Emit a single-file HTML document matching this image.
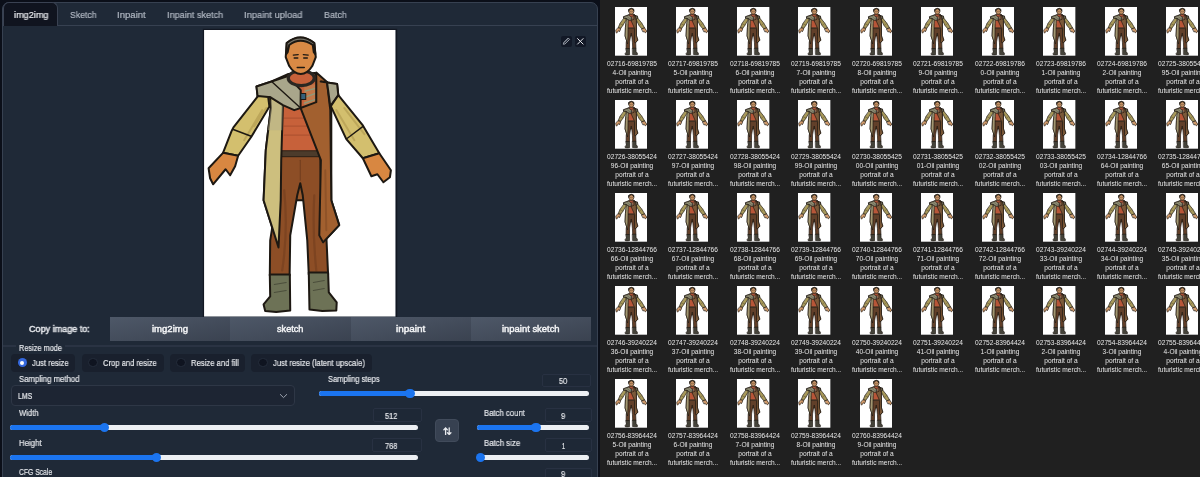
<!DOCTYPE html>
<html><head><meta charset="utf-8">
<style>
*{box-sizing:border-box;margin:0;padding:0}
html,body{width:1200px;height:477px;overflow:hidden;background:#0b0f19;font-family:"Liberation Sans",sans-serif}
.a{position:absolute} svg{display:block}
.t{position:absolute;white-space:nowrap;transform-origin:left top;line-height:normal;will-change:transform;-webkit-text-stroke:0.2px currentColor}
#lp{position:absolute;left:2px;top:2px;width:595.5px;height:490px;background:#1f2937;border:1px solid #374151;border-radius:7px 7px 0 0}
#gal{position:absolute;left:600px;top:0;width:600px;height:477px;background:#202020}
.trk{height:5px;border-radius:3px;background:#eceff3}
.fill{height:5px;border-radius:3px 0 0 3px;background:#1b74ef}
.thumb{width:9.4px;height:9.4px;border-radius:50%;background:#1b74ef}
.nb{border:1px solid #283142;border-radius:2px;background:#1e2836}
.btn{background:linear-gradient(to bottom right,#4e5868,#3a4250);}
.rb{background:#19202d;border-radius:4px}
.ib{width:10.6px;height:10.6px;background:#121826;border-radius:2px}
.tu{--sw:4;--sl:#a89a5c;--ln:#a39670;--ct:#735436;--cf:#7b5a3a;--lg:#62402a;--bt:#45433a;--lp:#8f8d74;--sh:#b9573a;--sk:#d09a6a;--hr:#a8a294;--sc:#a86a48}
.cap{position:absolute;width:80px;text-align:center;font-size:6.6px;line-height:8.9px;color:#e6e6e6;white-space:nowrap;will-change:transform}
</style></head><body>
<svg width="0" height="0" style="position:absolute"><defs><g id="fig">
<rect width="191" height="286" fill="#fff"/>
<g stroke="#1d1812" style="stroke-width:var(--sw,1.7)" stroke-linejoin="round" stroke-linecap="round">
<path d="M52.3 56.4 L67.4 51.4 L83.7 44 L111 43 L116.4 51.4 L132.8 53.9 L134 65.2 L127 80 L127 170 L134.9 194.8 L118.8 212 L115 205 L115 170 L76 170 L74.3 217 L59.4 170 L61.6 120 L66.7 77.7 L53.5 66.4 Z" style="fill:var(--ct,#9a5a2d)"/>
<path d="M76 124 L116 124 L117 172 L122 205 L123.8 244 L104.5 244 L103 210 L98.5 165 L96 153 L93 165 L86 205 L85.4 245 L65.6 245 L66 210 L72 172 Z" style="fill:var(--lg,#8d4e26)"/>
<path d="M80 160 Q84 200 78 240 M110 165 Q108 200 112 240" stroke="#6e3a1c" style="stroke-width:2.2;opacity:.5" fill="none"/>
<path d="M96 130 L96 150" stroke="#5e3018" style="stroke-width:1;opacity:.6"/>
<path d="M65.6 244 L85.6 244 L86 280 L72 281.5 L61 280.5 L59.4 274 L66 266 Z" style="fill:var(--bt,#6d7256)"/>
<path d="M104.5 242 L123.8 242 L124.5 262 L132.4 272 L132 280 L118 280.5 L105.2 279 Z" style="fill:var(--bt,#6d7256)"/>
<path d="M70 254 L82 252 M70 262 L82 260 M109 252 L120 250 M109 260 L120 258" stroke="#3d3f30" style="stroke-width:1;opacity:.7"/>
<path d="M78.7 50 L112 50 L112 122 L77.5 122 L78.7 74 Z" style="fill:var(--sh,#c7613a)" stroke="none"/>
<path d="M80 88 L108 88 M80 96 L109 96 M80 105 L110 105" stroke="#b05330" style="stroke-width:1.2"/>
<path d="M77.5 120.5 L115 120.5 L115 126.5 L77.5 126.5 Z" fill="#4c3b2b" style="stroke-width:0.8"/>
<path d="M66 66.4 L78.7 74 L77 130 L76.5 170 L74.3 217 L59.4 170 L61.6 120 L66.7 77.7 Z" style="fill:var(--ln,#cdbf7e)"/>
<path d="M66.5 70 L78.7 75 L78 100 L63.5 100 L66.7 77.7 Z" style="fill:var(--lp,#b3ae8c);stroke-width:0;opacity:.45"/>
<path d="M100 56 L112 54 L112 76 L100 81 Z" style="fill:var(--sc,#c2784a)" stroke="none"/>
<path d="M101 61 L112 58 M101 67 L112 63 M100 73 L112 69" stroke="#8e9a7a" style="stroke-width:1.4"/>
<path d="M96.3 77.8 L112 72 L112 42.5 L122.7 52 L126 80 L127 170 L134.9 194.8 L118.8 212 L115 205 L116.6 130 Z" style="fill:var(--cf,#a2602f)"/>
<path d="M121 140 L122 200" stroke="#7a4420" style="stroke-width:2;opacity:.45"/>
<path d="M112 44 L112 72" style="stroke-width:1.2"/>
<path d="M52.3 56.4 L67.4 51.4 L83.7 46 L90 53 L96.5 60 L96.3 77.8 L90 80 L78.7 75 L66 67 L53.5 67 Z" style="fill:var(--lp,#a9a68b)"/>
<path d="M67.4 51.4 L96.3 77.8" style="stroke-width:1.4"/>
<path d="M116.4 51.4 L132.8 53.9 L134 65.2 L126 76 L122.7 52 Z" style="fill:var(--lp,#a9a68b)"/>
<ellipse cx="97" cy="48" rx="13" ry="7.5" stroke="#2b2722" style="fill:var(--sh,#c7613a);stroke-width:3.2"/>
<rect x="96.5" y="63.5" width="5" height="6" fill="#36607a" style="stroke-width:1"/>
<path d="M53.8 66 L64 67 L65.2 76.4 L47.2 106.6 L34 125.5 L18.9 122.6 L27.4 101 L29.3 97.2 Z" style="fill:var(--sl,#d3bf6e)"/>
<path d="M58 80 L40 110 M62 78 L50 96" stroke="#a89048" style="stroke-width:2;opacity:.5"/>
<path d="M28.5 99 L47 106" style="stroke-width:1.6"/>
<path d="M134 65 L158.5 95.3 L174.9 123 L158.5 128 L142 109 L126.5 76 Z" style="fill:var(--sl,#d3bf6e)"/>
<path d="M132 80 L150 110 M140 78 L160 104" stroke="#a89048" style="stroke-width:2;opacity:.5"/>
<path d="M143 108 L159 96" style="stroke-width:1.4"/>
<path d="M18.9 122.6 L34 125.5 L31 136 L26 145 L21.5 139 L9 154 L6 148 L4.5 138 Z" style="fill:var(--sk,#d88741)"/>
<path d="M158.5 128 L174.9 123 L186.5 140 L185.5 147 L179 152 L173 144 L167 146 Z" style="fill:var(--sk,#d88741)"/>
<path d="M82.5 13 Q96 2 110 13 L111.5 27 L108 36 Q103 44 96.5 44 Q90 44 85 36 L81.5 27 Z" style="fill:var(--sk,#d98a45)"/>
<path d="M82.5 13 Q96 2 110 13 L111 24 L109.5 22 L108.5 15 Q96 6.5 85 15 L83.5 22 L82 24 Z" style="fill:var(--hr,#7a776d)"/>
<path d="M89 25 L94 24.5 M99 24.5 L104 25" style="stroke-width:1.2"/>
<path d="M90 28 L93.5 28 M99.5 28 L103 28 M93 37.5 L100 37.5" style="stroke-width:1.5"/>
</g>
</g>
</defs></svg>
<div id="lp"></div>
<div id="gal"></div>
<div class="a" style="left:58px;top:25px;width:539px;height:1px;background:#374151"></div><div class="a" style="left:3px;top:2px;width:55px;height:24px;background:#10141f;border:1px solid #3a4252;border-bottom:none;border-radius:6px 6px 0 0"></div><svg class="a" style="left:204px;top:30px;box-shadow:0 0 1px 1px rgba(8,10,18,.55)" width="191.5" height="286.5" viewBox="0 0 191 286"><use href="#fig" style="--sw:2"/></svg><div class="a ib" style="left:561.1px;top:36.2px"><svg style="display:block" width="10.6" height="10.6" viewBox="0 0 10.6 10.6"><path d="M2.3 8.3 L2.6 6.6 L7.2 2 L8.6 3.4 L4 8 Z" stroke="#a3a9b3" stroke-width="0.9" fill="none" stroke-linejoin="round"/><path d="M3 7.2 L7.6 2.6" stroke="#a3a9b3" stroke-width="0.6"/></svg></div><div class="a ib" style="left:575.2px;top:36.2px"><svg style="display:block" width="10.6" height="10.6" viewBox="0 0 10.6 10.6"><path d="M2.6 2.6 L8.1 8.1 M8.1 2.6 L2.6 8.1" stroke="#e5e7eb" stroke-width="1" stroke-linecap="round"/></svg></div><div class="a btn" style="left:110.00px;top:317px;width:120.5px;height:24px"></div><div class="a btn" style="left:230.25px;top:317px;width:120.5px;height:24px"></div><div class="a btn" style="left:350.50px;top:317px;width:120.5px;height:24px"></div><div class="a btn" style="left:470.75px;top:317px;width:120.5px;height:24px"></div><div class="a" style="left:3px;top:345.3px;width:594px;height:1.8px;background:#2a3343"></div><div class="a" style="left:16px;top:340px;width:49px;height:13px;background:#1f2937"></div><div class="a rb" style="left:11px;top:354px;width:64px;height:17.5px"></div><div class="a" style="left:17.799999999999997px;top:358.2px;width:9.2px;height:9.2px;border-radius:50%;background:#3568de"></div><div class="a" style="left:20.4px;top:360.8px;width:4px;height:4px;border-radius:50%;background:#fff"></div><div class="a rb" style="left:82px;top:354px;width:81.6px;height:17.5px"></div><div class="a" style="left:88.4px;top:358.2px;width:9.2px;height:9.2px;border-radius:50%;background:#0f1420;border:1px solid #252d3b"></div><div class="a rb" style="left:170px;top:354px;width:75px;height:17.5px"></div><div class="a" style="left:176.4px;top:358.2px;width:9.2px;height:9.2px;border-radius:50%;background:#0f1420;border:1px solid #252d3b"></div><div class="a rb" style="left:251px;top:354px;width:120.60000000000002px;height:17.5px"></div><div class="a" style="left:258.4px;top:358.2px;width:9.2px;height:9.2px;border-radius:50%;background:#0f1420;border:1px solid #252d3b"></div><div class="a" style="left:10.5px;top:385.2px;width:284px;height:20.6px;border:1px solid #2e3746;border-radius:4px;background:#1d2533"></div><svg class="a" style="left:279px;top:392.5px" width="9" height="6" viewBox="0 0 9 6"><path d="M1 1.2 L4.5 4.6 L8 1.2" stroke="#9ca3af" stroke-width="1" fill="none"/></svg><div class="a trk" style="left:319px;top:390.9px;width:270px"></div><div class="a fill" style="left:319px;top:390.9px;width:91px"></div><div class="a thumb" style="left:405.3px;top:388.7px"></div><div class="a trk" style="left:10.3px;top:425.0px;width:407.3px"></div><div class="a fill" style="left:10.3px;top:425.0px;width:94.4px"></div><div class="a thumb" style="left:100.0px;top:422.8px"></div><div class="a trk" style="left:10.3px;top:454.9px;width:407.3px"></div><div class="a fill" style="left:10.3px;top:454.9px;width:146.0px"></div><div class="a thumb" style="left:151.60000000000002px;top:452.7px"></div><div class="a trk" style="left:476.5px;top:425.0px;width:112.29999999999995px"></div><div class="a fill" style="left:476.5px;top:425.0px;width:59.5px"></div><div class="a thumb" style="left:531.3px;top:422.8px"></div><div class="a trk" style="left:476.5px;top:454.9px;width:112.29999999999995px"></div><div class="a fill" style="left:476.5px;top:454.9px;width:3.8999999999999773px"></div><div class="a thumb" style="left:475.7px;top:452.7px"></div><div class="a nb" style="left:541.7px;top:374px;width:49.09999999999991px;height:12.699999999999989px"></div><div class="a nb" style="left:372.5px;top:408.4px;width:49.39999999999998px;height:13.600000000000023px"></div><div class="a nb" style="left:371.5px;top:438.3px;width:50.39999999999998px;height:13.5px"></div><div class="a nb" style="left:544.8px;top:408.4px;width:47.60000000000002px;height:13.600000000000023px"></div><div class="a nb" style="left:544.8px;top:438.3px;width:47.60000000000002px;height:13.5px"></div><div class="a nb" style="left:544.8px;top:467.6px;width:47.60000000000002px;height:12.399999999999977px"></div><div class="a" style="left:435.3px;top:418.8px;width:23.4px;height:22.8px;border-radius:4px;background:#374151;border:1px solid #414b5b"></div><svg class="a" style="left:442.5px;top:426.5px" width="9" height="8.5" viewBox="0 0 9 8.5"><path d="M2.6 8 V1 M0.9 2.8 L2.6 1 L4.3 2.8 M6.2 0.8 V7.5 M4.5 5.7 L6.2 7.5 L7.9 5.7" stroke="#e8eaee" stroke-width="1.3" fill="none" stroke-linecap="round" stroke-linejoin="round"/></svg>
<div class="t" style="left:13.60px;top:9.22px;font-size:9.59px;transform:scaleX(0.954);font-weight:400;color:#eceef1">img2img</div>
<div class="t" style="left:69.60px;top:9.22px;font-size:9.59px;transform:scaleX(0.907);font-weight:400;color:#b0b7c2">Sketch</div>
<div class="t" style="left:117.30px;top:9.22px;font-size:9.59px;transform:scaleX(0.996);font-weight:400;color:#b0b7c2">Inpaint</div>
<div class="t" style="left:166.70px;top:9.22px;font-size:9.59px;transform:scaleX(0.951);font-weight:400;color:#b0b7c2">Inpaint sketch</div>
<div class="t" style="left:244.00px;top:9.22px;font-size:9.59px;transform:scaleX(0.972);font-weight:400;color:#b0b7c2">Inpaint upload</div>
<div class="t" style="left:323.60px;top:9.22px;font-size:9.59px;transform:scaleX(0.929);font-weight:400;color:#b0b7c2">Batch</div>
<div class="t" style="left:28.60px;top:323.91px;font-size:9.16px;transform:scaleX(0.987);font-weight:400;-webkit-text-stroke:0.45px currentColor;color:#e5e7eb">Copy image to:</div>
<div class="t" style="left:152.00px;top:323.91px;font-size:9.16px;transform:scaleX(1.040);font-weight:400;-webkit-text-stroke:0.45px currentColor;color:#f3f4f6">img2img</div>
<div class="t" style="left:277.00px;top:323.91px;font-size:9.16px;transform:scaleX(0.998);font-weight:400;-webkit-text-stroke:0.45px currentColor;color:#f3f4f6">sketch</div>
<div class="t" style="left:395.80px;top:323.91px;font-size:9.16px;transform:scaleX(1.086);font-weight:400;-webkit-text-stroke:0.45px currentColor;color:#f3f4f6">inpaint</div>
<div class="t" style="left:502.40px;top:323.91px;font-size:9.16px;transform:scaleX(1.029);font-weight:400;-webkit-text-stroke:0.45px currentColor;color:#f3f4f6">inpaint sketch</div>
<div class="t" style="left:18.60px;top:342.57px;font-size:8.87px;transform:scaleX(0.831);font-weight:400;color:#e5e7eb">Resize mode</div>
<div class="t" style="left:32.00px;top:358.17px;font-size:8.87px;transform:scaleX(0.864);font-weight:400;color:#e5e7eb">Just resize</div>
<div class="t" style="left:102.60px;top:358.17px;font-size:8.87px;transform:scaleX(0.860);font-weight:400;color:#e5e7eb">Crop and resize</div>
<div class="t" style="left:190.60px;top:358.17px;font-size:8.87px;transform:scaleX(0.866);font-weight:400;color:#e5e7eb">Resize and fill</div>
<div class="t" style="left:273.00px;top:358.17px;font-size:8.87px;transform:scaleX(0.872);font-weight:400;color:#e5e7eb">Just resize (latent upscale)</div>
<div class="t" style="left:18.90px;top:373.97px;font-size:8.87px;transform:scaleX(0.877);font-weight:400;color:#e5e7eb">Sampling method</div>
<div class="t" style="left:327.70px;top:373.97px;font-size:8.87px;transform:scaleX(0.851);font-weight:400;color:#e5e7eb">Sampling steps</div>
<div class="t" style="left:17.80px;top:391.17px;font-size:8.43px;transform:scaleX(0.819);font-weight:400;color:#e5e7eb">LMS</div>
<div class="t" style="left:559.00px;top:376.44px;font-size:8.58px;transform:scaleX(0.860);font-weight:400;color:#e5e7eb">50</div>
<div class="t" style="left:18.90px;top:408.07px;font-size:8.87px;transform:scaleX(0.865);font-weight:400;color:#e5e7eb">Width</div>
<div class="t" style="left:483.80px;top:408.07px;font-size:8.87px;transform:scaleX(0.873);font-weight:400;color:#e5e7eb">Batch count</div>
<div class="t" style="left:385.20px;top:410.84px;font-size:8.58px;transform:scaleX(0.867);font-weight:400;color:#e5e7eb">512</div>
<div class="t" style="left:560.80px;top:410.67px;font-size:8.43px;transform:scaleX(0.896);font-weight:400;color:#e5e7eb">9</div>
<div class="t" style="left:18.90px;top:438.07px;font-size:8.87px;transform:scaleX(0.882);font-weight:400;color:#e5e7eb">Height</div>
<div class="t" style="left:483.80px;top:438.07px;font-size:8.87px;transform:scaleX(0.885);font-weight:400;color:#e5e7eb">Batch size</div>
<div class="t" style="left:385.20px;top:440.64px;font-size:8.58px;transform:scaleX(0.867);font-weight:400;color:#e5e7eb">768</div>
<div class="t" style="left:561.50px;top:440.67px;font-size:8.43px;transform:scaleX(0.640);font-weight:400;color:#e5e7eb">1</div>
<div class="t" style="left:18.90px;top:467.47px;font-size:8.87px;transform:scaleX(0.763);font-weight:400;color:#e5e7eb">CFG Scale</div>
<div class="t" style="left:560.80px;top:469.17px;font-size:8.43px;transform:scaleX(0.896);font-weight:400;color:#e5e7eb">9</div>
<svg class="a" style="left:614.75px;top:6.90px" width="32.35" height="48.7" viewBox="0 0 191 286" preserveAspectRatio="none"><use href="#fig" class="tu"/></svg><div class="cap" style="left:592.25px;top:60.40px">02716-69819785<br>4-Oil painting<br>portrait of a<br>futuristic merch...</div><svg class="a" style="left:675.98px;top:6.90px" width="32.35" height="48.7" viewBox="0 0 191 286" preserveAspectRatio="none"><use href="#fig" class="tu"/></svg><div class="cap" style="left:653.48px;top:60.40px">02717-69819785<br>5-Oil painting<br>portrait of a<br>futuristic merch...</div><svg class="a" style="left:737.21px;top:6.90px" width="32.35" height="48.7" viewBox="0 0 191 286" preserveAspectRatio="none"><use href="#fig" class="tu"/></svg><div class="cap" style="left:714.71px;top:60.40px">02718-69819785<br>6-Oil painting<br>portrait of a<br>futuristic merch...</div><svg class="a" style="left:798.44px;top:6.90px" width="32.35" height="48.7" viewBox="0 0 191 286" preserveAspectRatio="none"><use href="#fig" class="tu"/></svg><div class="cap" style="left:775.94px;top:60.40px">02719-69819785<br>7-Oil painting<br>portrait of a<br>futuristic merch...</div><svg class="a" style="left:859.67px;top:6.90px" width="32.35" height="48.7" viewBox="0 0 191 286" preserveAspectRatio="none"><use href="#fig" class="tu"/></svg><div class="cap" style="left:837.17px;top:60.40px">02720-69819785<br>8-Oil painting<br>portrait of a<br>futuristic merch...</div><svg class="a" style="left:920.90px;top:6.90px" width="32.35" height="48.7" viewBox="0 0 191 286" preserveAspectRatio="none"><use href="#fig" class="tu"/></svg><div class="cap" style="left:898.40px;top:60.40px">02721-69819785<br>9-Oil painting<br>portrait of a<br>futuristic merch...</div><svg class="a" style="left:982.13px;top:6.90px" width="32.35" height="48.7" viewBox="0 0 191 286" preserveAspectRatio="none"><use href="#fig" class="tu"/></svg><div class="cap" style="left:959.63px;top:60.40px">02722-69819786<br>0-Oil painting<br>portrait of a<br>futuristic merch...</div><svg class="a" style="left:1043.36px;top:6.90px" width="32.35" height="48.7" viewBox="0 0 191 286" preserveAspectRatio="none"><use href="#fig" class="tu"/></svg><div class="cap" style="left:1020.86px;top:60.40px">02723-69819786<br>1-Oil painting<br>portrait of a<br>futuristic merch...</div><svg class="a" style="left:1104.59px;top:6.90px" width="32.35" height="48.7" viewBox="0 0 191 286" preserveAspectRatio="none"><use href="#fig" class="tu"/></svg><div class="cap" style="left:1082.09px;top:60.40px">02724-69819786<br>2-Oil painting<br>portrait of a<br>futuristic merch...</div><svg class="a" style="left:1165.82px;top:6.90px" width="32.35" height="48.7" viewBox="0 0 191 286" preserveAspectRatio="none"><use href="#fig" class="tu"/></svg><div class="cap" style="left:1143.32px;top:60.40px">02725-38055424<br>95-Oil painting<br>portrait of a<br>futuristic merch...</div><svg class="a" style="left:614.75px;top:99.90px" width="32.35" height="48.7" viewBox="0 0 191 286" preserveAspectRatio="none"><use href="#fig" class="tu"/></svg><div class="cap" style="left:592.25px;top:153.40px">02726-38055424<br>96-Oil painting<br>portrait of a<br>futuristic merch...</div><svg class="a" style="left:675.98px;top:99.90px" width="32.35" height="48.7" viewBox="0 0 191 286" preserveAspectRatio="none"><use href="#fig" class="tu"/></svg><div class="cap" style="left:653.48px;top:153.40px">02727-38055424<br>97-Oil painting<br>portrait of a<br>futuristic merch...</div><svg class="a" style="left:737.21px;top:99.90px" width="32.35" height="48.7" viewBox="0 0 191 286" preserveAspectRatio="none"><use href="#fig" class="tu"/></svg><div class="cap" style="left:714.71px;top:153.40px">02728-38055424<br>98-Oil painting<br>portrait of a<br>futuristic merch...</div><svg class="a" style="left:798.44px;top:99.90px" width="32.35" height="48.7" viewBox="0 0 191 286" preserveAspectRatio="none"><use href="#fig" class="tu"/></svg><div class="cap" style="left:775.94px;top:153.40px">02729-38055424<br>99-Oil painting<br>portrait of a<br>futuristic merch...</div><svg class="a" style="left:859.67px;top:99.90px" width="32.35" height="48.7" viewBox="0 0 191 286" preserveAspectRatio="none"><use href="#fig" class="tu"/></svg><div class="cap" style="left:837.17px;top:153.40px">02730-38055425<br>00-Oil painting<br>portrait of a<br>futuristic merch...</div><svg class="a" style="left:920.90px;top:99.90px" width="32.35" height="48.7" viewBox="0 0 191 286" preserveAspectRatio="none"><use href="#fig" class="tu"/></svg><div class="cap" style="left:898.40px;top:153.40px">02731-38055425<br>01-Oil painting<br>portrait of a<br>futuristic merch...</div><svg class="a" style="left:982.13px;top:99.90px" width="32.35" height="48.7" viewBox="0 0 191 286" preserveAspectRatio="none"><use href="#fig" class="tu"/></svg><div class="cap" style="left:959.63px;top:153.40px">02732-38055425<br>02-Oil painting<br>portrait of a<br>futuristic merch...</div><svg class="a" style="left:1043.36px;top:99.90px" width="32.35" height="48.7" viewBox="0 0 191 286" preserveAspectRatio="none"><use href="#fig" class="tu"/></svg><div class="cap" style="left:1020.86px;top:153.40px">02733-38055425<br>03-Oil painting<br>portrait of a<br>futuristic merch...</div><svg class="a" style="left:1104.59px;top:99.90px" width="32.35" height="48.7" viewBox="0 0 191 286" preserveAspectRatio="none"><use href="#fig" class="tu"/></svg><div class="cap" style="left:1082.09px;top:153.40px">02734-12844766<br>64-Oil painting<br>portrait of a<br>futuristic merch...</div><svg class="a" style="left:1165.82px;top:99.90px" width="32.35" height="48.7" viewBox="0 0 191 286" preserveAspectRatio="none"><use href="#fig" class="tu"/></svg><div class="cap" style="left:1143.32px;top:153.40px">02735-12844766<br>65-Oil painting<br>portrait of a<br>futuristic merch...</div><svg class="a" style="left:614.75px;top:192.90px" width="32.35" height="48.7" viewBox="0 0 191 286" preserveAspectRatio="none"><use href="#fig" class="tu"/></svg><div class="cap" style="left:592.25px;top:246.40px">02736-12844766<br>66-Oil painting<br>portrait of a<br>futuristic merch...</div><svg class="a" style="left:675.98px;top:192.90px" width="32.35" height="48.7" viewBox="0 0 191 286" preserveAspectRatio="none"><use href="#fig" class="tu"/></svg><div class="cap" style="left:653.48px;top:246.40px">02737-12844766<br>67-Oil painting<br>portrait of a<br>futuristic merch...</div><svg class="a" style="left:737.21px;top:192.90px" width="32.35" height="48.7" viewBox="0 0 191 286" preserveAspectRatio="none"><use href="#fig" class="tu"/></svg><div class="cap" style="left:714.71px;top:246.40px">02738-12844766<br>68-Oil painting<br>portrait of a<br>futuristic merch...</div><svg class="a" style="left:798.44px;top:192.90px" width="32.35" height="48.7" viewBox="0 0 191 286" preserveAspectRatio="none"><use href="#fig" class="tu"/></svg><div class="cap" style="left:775.94px;top:246.40px">02739-12844766<br>69-Oil painting<br>portrait of a<br>futuristic merch...</div><svg class="a" style="left:859.67px;top:192.90px" width="32.35" height="48.7" viewBox="0 0 191 286" preserveAspectRatio="none"><use href="#fig" class="tu"/></svg><div class="cap" style="left:837.17px;top:246.40px">02740-12844766<br>70-Oil painting<br>portrait of a<br>futuristic merch...</div><svg class="a" style="left:920.90px;top:192.90px" width="32.35" height="48.7" viewBox="0 0 191 286" preserveAspectRatio="none"><use href="#fig" class="tu"/></svg><div class="cap" style="left:898.40px;top:246.40px">02741-12844766<br>71-Oil painting<br>portrait of a<br>futuristic merch...</div><svg class="a" style="left:982.13px;top:192.90px" width="32.35" height="48.7" viewBox="0 0 191 286" preserveAspectRatio="none"><use href="#fig" class="tu"/></svg><div class="cap" style="left:959.63px;top:246.40px">02742-12844766<br>72-Oil painting<br>portrait of a<br>futuristic merch...</div><svg class="a" style="left:1043.36px;top:192.90px" width="32.35" height="48.7" viewBox="0 0 191 286" preserveAspectRatio="none"><use href="#fig" class="tu"/></svg><div class="cap" style="left:1020.86px;top:246.40px">02743-39240224<br>33-Oil painting<br>portrait of a<br>futuristic merch...</div><svg class="a" style="left:1104.59px;top:192.90px" width="32.35" height="48.7" viewBox="0 0 191 286" preserveAspectRatio="none"><use href="#fig" class="tu"/></svg><div class="cap" style="left:1082.09px;top:246.40px">02744-39240224<br>34-Oil painting<br>portrait of a<br>futuristic merch...</div><svg class="a" style="left:1165.82px;top:192.90px" width="32.35" height="48.7" viewBox="0 0 191 286" preserveAspectRatio="none"><use href="#fig" class="tu"/></svg><div class="cap" style="left:1143.32px;top:246.40px">02745-39240224<br>35-Oil painting<br>portrait of a<br>futuristic merch...</div><svg class="a" style="left:614.75px;top:285.90px" width="32.35" height="48.7" viewBox="0 0 191 286" preserveAspectRatio="none"><use href="#fig" class="tu"/></svg><div class="cap" style="left:592.25px;top:339.40px">02746-39240224<br>36-Oil painting<br>portrait of a<br>futuristic merch...</div><svg class="a" style="left:675.98px;top:285.90px" width="32.35" height="48.7" viewBox="0 0 191 286" preserveAspectRatio="none"><use href="#fig" class="tu"/></svg><div class="cap" style="left:653.48px;top:339.40px">02747-39240224<br>37-Oil painting<br>portrait of a<br>futuristic merch...</div><svg class="a" style="left:737.21px;top:285.90px" width="32.35" height="48.7" viewBox="0 0 191 286" preserveAspectRatio="none"><use href="#fig" class="tu"/></svg><div class="cap" style="left:714.71px;top:339.40px">02748-39240224<br>38-Oil painting<br>portrait of a<br>futuristic merch...</div><svg class="a" style="left:798.44px;top:285.90px" width="32.35" height="48.7" viewBox="0 0 191 286" preserveAspectRatio="none"><use href="#fig" class="tu"/></svg><div class="cap" style="left:775.94px;top:339.40px">02749-39240224<br>39-Oil painting<br>portrait of a<br>futuristic merch...</div><svg class="a" style="left:859.67px;top:285.90px" width="32.35" height="48.7" viewBox="0 0 191 286" preserveAspectRatio="none"><use href="#fig" class="tu"/></svg><div class="cap" style="left:837.17px;top:339.40px">02750-39240224<br>40-Oil painting<br>portrait of a<br>futuristic merch...</div><svg class="a" style="left:920.90px;top:285.90px" width="32.35" height="48.7" viewBox="0 0 191 286" preserveAspectRatio="none"><use href="#fig" class="tu"/></svg><div class="cap" style="left:898.40px;top:339.40px">02751-39240224<br>41-Oil painting<br>portrait of a<br>futuristic merch...</div><svg class="a" style="left:982.13px;top:285.90px" width="32.35" height="48.7" viewBox="0 0 191 286" preserveAspectRatio="none"><use href="#fig" class="tu"/></svg><div class="cap" style="left:959.63px;top:339.40px">02752-83964424<br>1-Oil painting<br>portrait of a<br>futuristic merch...</div><svg class="a" style="left:1043.36px;top:285.90px" width="32.35" height="48.7" viewBox="0 0 191 286" preserveAspectRatio="none"><use href="#fig" class="tu"/></svg><div class="cap" style="left:1020.86px;top:339.40px">02753-83964424<br>2-Oil painting<br>portrait of a<br>futuristic merch...</div><svg class="a" style="left:1104.59px;top:285.90px" width="32.35" height="48.7" viewBox="0 0 191 286" preserveAspectRatio="none"><use href="#fig" class="tu"/></svg><div class="cap" style="left:1082.09px;top:339.40px">02754-83964424<br>3-Oil painting<br>portrait of a<br>futuristic merch...</div><svg class="a" style="left:1165.82px;top:285.90px" width="32.35" height="48.7" viewBox="0 0 191 286" preserveAspectRatio="none"><use href="#fig" class="tu"/></svg><div class="cap" style="left:1143.32px;top:339.40px">02755-83964424<br>4-Oil painting<br>portrait of a<br>futuristic merch...</div><svg class="a" style="left:614.75px;top:378.90px" width="32.35" height="48.7" viewBox="0 0 191 286" preserveAspectRatio="none"><use href="#fig" class="tu"/></svg><div class="cap" style="left:592.25px;top:432.40px">02756-83964424<br>5-Oil painting<br>portrait of a<br>futuristic merch...</div><svg class="a" style="left:675.98px;top:378.90px" width="32.35" height="48.7" viewBox="0 0 191 286" preserveAspectRatio="none"><use href="#fig" class="tu"/></svg><div class="cap" style="left:653.48px;top:432.40px">02757-83964424<br>6-Oil painting<br>portrait of a<br>futuristic merch...</div><svg class="a" style="left:737.21px;top:378.90px" width="32.35" height="48.7" viewBox="0 0 191 286" preserveAspectRatio="none"><use href="#fig" class="tu"/></svg><div class="cap" style="left:714.71px;top:432.40px">02758-83964424<br>7-Oil painting<br>portrait of a<br>futuristic merch...</div><svg class="a" style="left:798.44px;top:378.90px" width="32.35" height="48.7" viewBox="0 0 191 286" preserveAspectRatio="none"><use href="#fig" class="tu"/></svg><div class="cap" style="left:775.94px;top:432.40px">02759-83964424<br>8-Oil painting<br>portrait of a<br>futuristic merch...</div><svg class="a" style="left:859.67px;top:378.90px" width="32.35" height="48.7" viewBox="0 0 191 286" preserveAspectRatio="none"><use href="#fig" class="tu"/></svg><div class="cap" style="left:837.17px;top:432.40px">02760-83964424<br>9-Oil painting<br>portrait of a<br>futuristic merch...</div>
</body></html>
